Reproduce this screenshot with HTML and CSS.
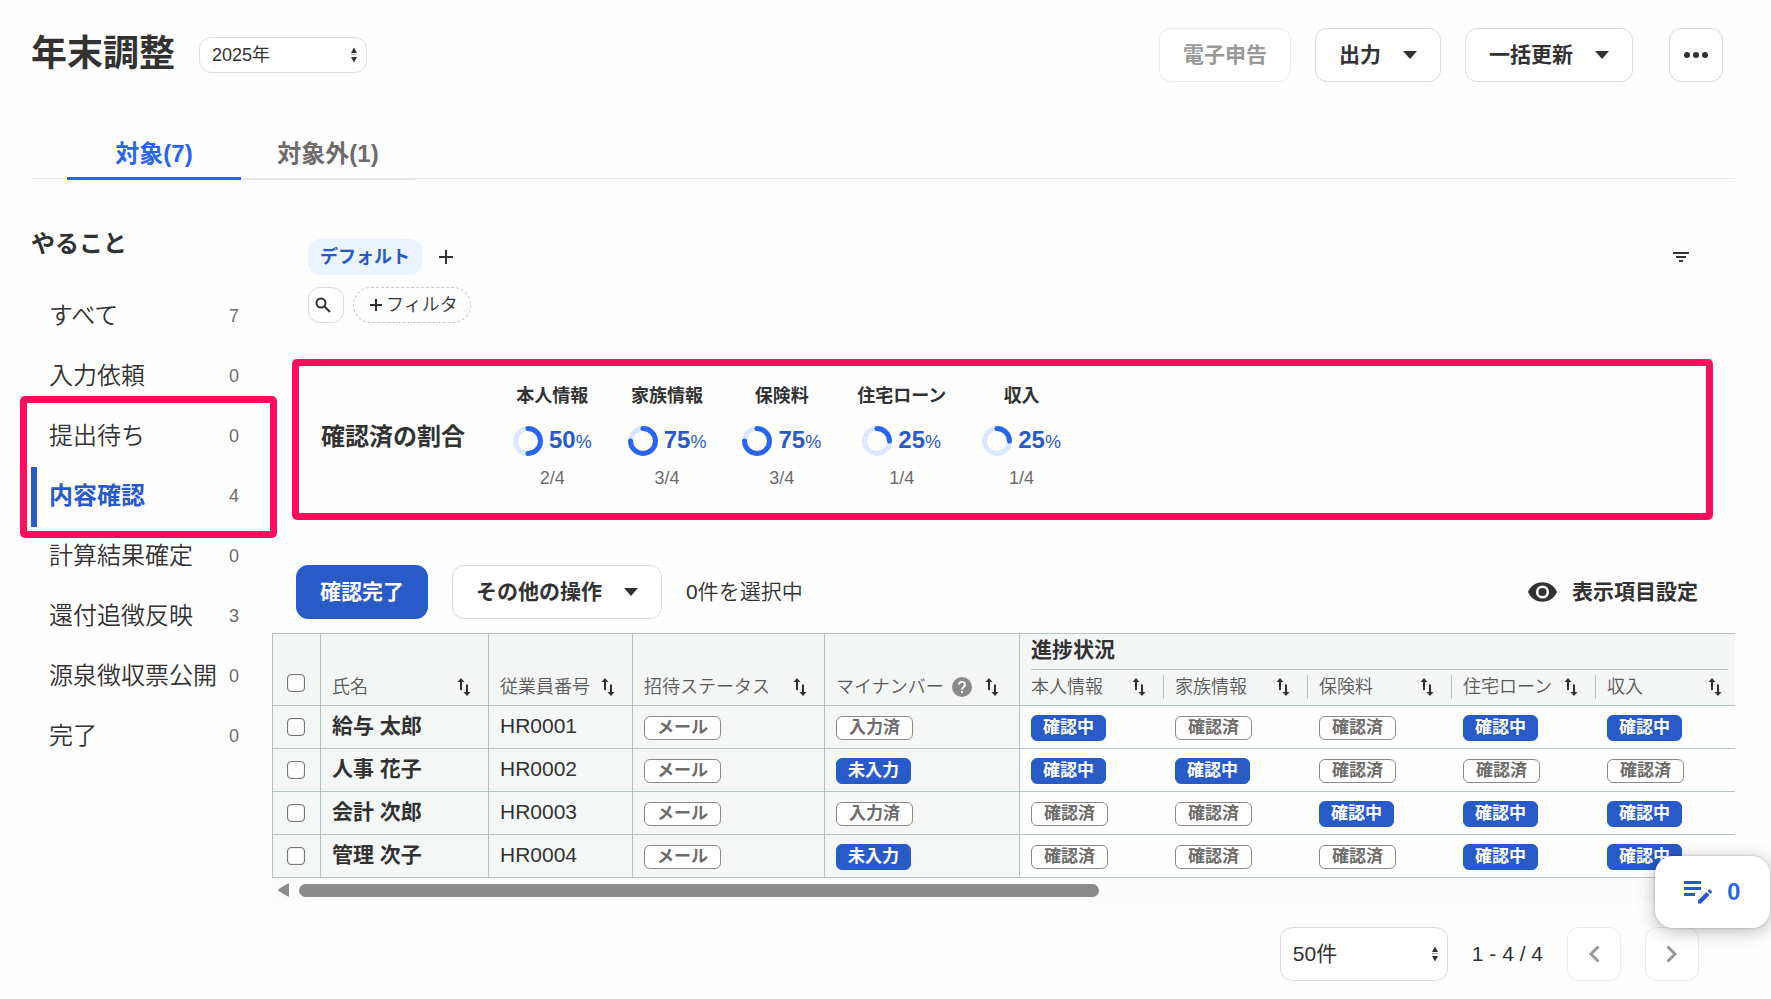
FILE: index.html
```html
<!DOCTYPE html>
<html lang="ja">
<head>
<meta charset="utf-8">
<meta name="viewport" content="width=device-width, initial-scale=1">
<title>年末調整</title>
<link rel="stylesheet" href="styles.css">
</head>
<body>
<svg class="sprite" aria-hidden="true">
  <symbol id="i-caret" viewBox="0 0 14 8"><path d="M0 0h14L7 8z"/></symbol>
  <symbol id="i-updown" viewBox="0 0 8 16"><path d="M4 0.500L7 6H1zM4 15.500L1 10h6z"/><path d="M1 7h6v1H1z" opacity=".35"/></symbol>
  <symbol id="i-sort" viewBox="0 0 24 24"><path d="M9 3l3.500 4H10v8H8V7H5.500zM15 21l-3.500-4H14V9.500h2V17h2.500z"/></symbol>
  <symbol id="i-help" viewBox="0 0 24 24"><circle cx="12" cy="12" r="10"/><path d="M9 9.600a3 2.800 0 1 1 4.700 2.300c-1.100.8-1.700 1.200-1.700 2.700" fill="none" stroke="#fff" stroke-width="2"/><path d="M11 16h2v2h-2z" fill="#fff"/></symbol>
</svg>
<div class="page">
  <header class="header">
    <h1 class="title">年末調整</h1>
    <div class="select select-year">
      <select aria-label="年度"><option>2025年</option></select>
      <svg><use href="#i-updown"/></svg>
    </div>
    <div class="actions">
      <button class="btn" disabled>電子申告</button>
      <button class="btn">出力<svg class="caret"><use href="#i-caret"/></svg></button>
      <button class="btn">一括更新<svg class="caret"><use href="#i-caret"/></svg></button>
      <button class="btn btn-more" aria-label="その他"><svg viewBox="0 0 26 8"><circle cx="4" cy="4" r="3"/><circle cx="13" cy="4" r="3"/><circle cx="22" cy="4" r="3"/></svg></button>
    </div>
  </header>

  <nav class="tabs">
    <a class="tab is-active" href="#target">対象(7)</a>
    <a class="tab" href="#excluded">対象外(1)</a>
  </nav>

  <div class="body">
    <aside class="sidebar">
      <h2 class="side-title">やること</h2>
      <ul class="todo">
        <li><a href="#all"><span>すべて</span><span class="count">7</span></a></li>
        <li><a href="#request"><span>入力依頼</span><span class="count">0</span></a></li>
        <li><a href="#waiting"><span>提出待ち</span><span class="count">0</span></a></li>
        <li><a class="is-current" href="#check"><span>内容確認</span><span class="count">4</span></a></li>
        <li><a href="#fix"><span>計算結果確定</span><span class="count">0</span></a></li>
        <li><a href="#refund"><span>還付追徴反映</span><span class="count">3</span></a></li>
        <li><a href="#publish"><span>源泉徴収票公開</span><span class="count">0</span></a></li>
        <li><a href="#done"><span>完了</span><span class="count">0</span></a></li>
      </ul>
      <div class="highlight"></div>
    </aside>

    <main class="main">
      <div class="views">
        <button class="view-chip">デフォルト</button>
        <button class="icon-btn" aria-label="ビューを追加"><svg class="plus" viewBox="0 0 16 16"><path d="M7 1h2v6h6v2H9v6H7V9H1V7h6z"/></svg></button>
        <button class="icon-btn filter-btn" aria-label="並べ替え"><svg class="filter-icon" viewBox="0 0 16 10"><path d="M0 0h16v2H0zM3 4h10v2H3zM6 8h4v2H6z"/></svg></button>
      </div>
      <div class="filters">
        <button class="search-btn" aria-label="検索"><svg viewBox="0 0 16 16"><circle cx="6" cy="6" r="4.500" fill="none" stroke="currentColor" stroke-width="2"/><path d="M9.500 9.500L15 15" stroke="currentColor" stroke-width="2"/></svg></button>
        <button class="add-filter"><svg viewBox="0 0 12 12"><path d="M5 0h2v5h5v2H7v5H5V7H0V5h5z"/></svg>フィルタ</button>
      </div>

      <section class="summary">
        <h2 class="summary-title">確認済の割合</h2>
        <dl class="rates">
          <div class="rate"><dt>本人情報</dt><dd class="pct"><svg class="ring" viewBox="0 0 30 30"><circle class="track" cx="15" cy="15" r="12.500"/><circle class="arc" cx="15" cy="15" r="12.500" pathLength="100" stroke-dasharray="50 100"/></svg><span><b>50</b>%</span></dd><dd class="frac">2/4</dd></div>
          <div class="rate"><dt>家族情報</dt><dd class="pct"><svg class="ring" viewBox="0 0 30 30"><circle class="track" cx="15" cy="15" r="12.500"/><circle class="arc" cx="15" cy="15" r="12.500" pathLength="100" stroke-dasharray="75 100"/></svg><span><b>75</b>%</span></dd><dd class="frac">3/4</dd></div>
          <div class="rate"><dt>保険料</dt><dd class="pct"><svg class="ring" viewBox="0 0 30 30"><circle class="track" cx="15" cy="15" r="12.500"/><circle class="arc" cx="15" cy="15" r="12.500" pathLength="100" stroke-dasharray="75 100"/></svg><span><b>75</b>%</span></dd><dd class="frac">3/4</dd></div>
          <div class="rate"><dt>住宅ローン</dt><dd class="pct"><svg class="ring" viewBox="0 0 30 30"><circle class="track" cx="15" cy="15" r="12.500"/><circle class="arc" cx="15" cy="15" r="12.500" pathLength="100" stroke-dasharray="25 100"/></svg><span><b>25</b>%</span></dd><dd class="frac">1/4</dd></div>
          <div class="rate"><dt>収入</dt><dd class="pct"><svg class="ring" viewBox="0 0 30 30"><circle class="track" cx="15" cy="15" r="12.500"/><circle class="arc" cx="15" cy="15" r="12.500" pathLength="100" stroke-dasharray="25 100"/></svg><span><b>25</b>%</span></dd><dd class="frac">1/4</dd></div>
        </dl>
      </section>

      <div class="toolbar">
        <button class="btn btn-primary">確認完了</button>
        <button class="btn">その他の操作<svg class="caret"><use href="#i-caret"/></svg></button>
        <span class="selected">0件を選択中</span>
        <button class="columns-btn"><svg viewBox="0 0 30 20"><path fill-rule="evenodd" d="M15 0C8 0 2.500 4 0 10c2.500 6 8 10 15 10s12.500-4 15-10C27.500 4 22 0 15 0zm0 3.200a6.800 6.800 0 1 1 0 13.600 6.800 6.800 0 0 1 0-13.600z"/><circle cx="15" cy="10" r="4.200"/></svg>表示項目設定</button>
      </div>

      <div class="table-wrap">
        <table class="grid">
          <colgroup><col class="c-check"><col class="c-name"><col class="c-no"><col class="c-invite"><col class="c-my"><col class="c-prog" span="5"></colgroup>
          <thead>
            <tr>
              <th class="check" rowspan="2"><input type="checkbox" aria-label="すべて選択"></th>
              <th rowspan="2"><div class="label">氏名<svg><use href="#i-sort"/></svg></div></th>
              <th rowspan="2"><div class="label">従業員番号<svg><use href="#i-sort"/></svg></div></th>
              <th rowspan="2"><div class="label">招待ステータス<svg><use href="#i-sort"/></svg></div></th>
              <th rowspan="2"><div class="label label-help">マイナンバー<svg class="help"><use href="#i-help"/></svg><svg><use href="#i-sort"/></svg></div></th>
              <th class="group" colspan="5"><div>進捗状況</div></th>
            </tr>
            <tr class="subs">
              <th><div class="label">本人情報<svg><use href="#i-sort"/></svg></div></th>
              <th><div class="label">家族情報<svg><use href="#i-sort"/></svg></div></th>
              <th><div class="label">保険料<svg><use href="#i-sort"/></svg></div></th>
              <th><div class="label">住宅ローン<svg><use href="#i-sort"/></svg></div></th>
              <th><div class="label">収入<svg><use href="#i-sort"/></svg></div></th>
            </tr>
          </thead>
          <tbody>
            <tr>
              <td class="check"><input type="checkbox" aria-label="給与 太郎を選択"></td><td class="text name">給与 太郎</td><td class="text">HR0001</td>
              <td><span class="badge">メール</span></td><td><span class="badge">入力済</span></td>
              <td><span class="badge on">確認中</span></td><td><span class="badge">確認済</span></td><td><span class="badge">確認済</span></td><td><span class="badge on">確認中</span></td><td><span class="badge on">確認中</span></td>
            </tr>
            <tr>
              <td class="check"><input type="checkbox" aria-label="人事 花子を選択"></td><td class="text name">人事 花子</td><td class="text">HR0002</td>
              <td><span class="badge">メール</span></td><td><span class="badge on">未入力</span></td>
              <td><span class="badge on">確認中</span></td><td><span class="badge on">確認中</span></td><td><span class="badge">確認済</span></td><td><span class="badge">確認済</span></td><td><span class="badge">確認済</span></td>
            </tr>
            <tr>
              <td class="check"><input type="checkbox" aria-label="会計 次郎を選択"></td><td class="text name">会計 次郎</td><td class="text">HR0003</td>
              <td><span class="badge">メール</span></td><td><span class="badge">入力済</span></td>
              <td><span class="badge">確認済</span></td><td><span class="badge">確認済</span></td><td><span class="badge on">確認中</span></td><td><span class="badge on">確認中</span></td><td><span class="badge on">確認中</span></td>
            </tr>
            <tr>
              <td class="check"><input type="checkbox" aria-label="管理 次子を選択"></td><td class="text name">管理 次子</td><td class="text">HR0004</td>
              <td><span class="badge">メール</span></td><td><span class="badge on">未入力</span></td>
              <td><span class="badge">確認済</span></td><td><span class="badge">確認済</span></td><td><span class="badge">確認済</span></td><td><span class="badge on">確認中</span></td><td><span class="badge on">確認中</span></td>
            </tr>
          </tbody>
        </table>
      </div>
      <div class="scrollbar"><svg viewBox="0 0 11 14"><path d="M11 1v12q0 1-1 .6L.7 8Q0 7 .7 6L10 .4q1-.4 1 .6z"/></svg><div class="track-area"><div class="thumb"></div></div></div>

      <div class="pager">
        <div class="select select-size">
          <select aria-label="表示件数"><option>50件</option></select>
          <svg><use href="#i-updown"/></svg>
        </div>
        <span class="range">1 - 4 / 4</span>
        <button class="btn btn-page" disabled aria-label="前へ"><svg viewBox="0 0 12 18"><path d="M10.500 1.500L3 9l7.500 7.500"/></svg></button>
        <button class="btn btn-page" disabled aria-label="次へ"><svg viewBox="0 0 12 18"><path d="M1.500 1.500L9 9l-7.500 7.500"/></svg></button>
      </div>
    </main>
  </div>
</div>
<button class="memo" aria-label="メモ 0件"><svg viewBox="0 0 28 24"><path d="M0 1h17v3H0zM0 7h17v3H0zM0 13h11v3H0zM14 20.500l8.500-8.500 3 3L17 23.500h-3zM23.500 11l1.300-1.300q.7-.7 1.400 0l1.500 1.500q.7.700 0 1.400L26.400 14z"/></svg>0</button>
</body>
</html>
```
FILE: styles.css
```css
:root {
  --ink: #323232;
  --muted: #6e6b6b;
  --line: #dcdcdc;
  --grid: #b5c5c3;
  --blue: #285ac8;
  --bright: #2864f0;
  --mark: #ff0d5a;
}

* { box-sizing: border-box; }

body {
  margin: 0;
  background: #fefefe;
  color: var(--ink);
  font-family: "Liberation Sans", "Noto Sans CJK JP", sans-serif;
  font-size: 21px;
  line-height: 24px;
}

h1, h2, ul, dl, dd { margin: 0; padding: 0; }
a { color: inherit; text-decoration: none; }
button, select { font: inherit; color: inherit; }
button { padding: 0; border: 0; background: none; }
svg { display: block; fill: currentColor; flex: none; }
.sprite { position: absolute; width: 0; height: 0; }

.page { padding: 28px 36px 0 31px; }

.header { display: flex; align-items: center; padding-right: 12px; }
.title { font-size: 36px; line-height: 52px; padding-bottom: 2px; margin-right: 24px; }
.actions { display: flex; gap: 24px; margin-left: auto; }

.btn {
  display: inline-flex;
  align-items: center;
  justify-content: center;
  gap: 22px;
  height: 54px;
  padding: 0 23px;
  border: 1px solid var(--line);
  border-radius: 12px;
  background: #fff;
  font-weight: 700;
}
.btn:disabled { color: #999; border-color: #ececec; }
.caret { width: 14px; height: 8px; }
.btn-more { width: 54px; padding: 0; margin-left: 12px; }
.btn-more svg { width: 26px; height: 8px; }

.select { display: grid; align-items: center; }
.select > * { grid-area: 1 / 1; }
.select select {
  appearance: none;
  width: 168px;
  border: 1px solid var(--line);
  border-radius: 12px;
  background: #fff;
  padding: 0 12px;
}
.select svg { justify-self: end; width: 8px; height: 16px; margin-right: 9px; pointer-events: none; }
.select-year select { height: 36px; font-size: 18px; }
.select-size select { height: 54px; }

.tabs {
  display: flex;
  margin-top: 45px;
  height: 52px;
  padding-left: 36px;
  border-bottom: 1px solid #e6e6e6;
}
.tab {
  width: 174px;
  height: 53px;
  padding-top: 15px;
  text-align: center;
  font-size: 24px;
  font-weight: 700;
  color: var(--muted);
  border-bottom: 2px solid #e6e6e6;
}
.tab.is-active { color: var(--bright); border-bottom: 3px solid var(--bright); }

.body { display: flex; }
.sidebar { position: relative; flex: none; width: 241px; padding-top: 47px; }
.side-title { font-size: 24px; line-height: 36px; margin-bottom: 25px; }
.todo { list-style: none; }
.todo a {
  display: flex;
  align-items: center;
  justify-content: space-between;
  height: 60px;
  padding: 0 33px 2px 12px;
  border-left: 6px solid transparent;
  font-size: 24px;
  font-weight: 350;
}
.todo .count { font-size: 18px; font-weight: 400; color: var(--muted); }
.todo .is-current { border-color: var(--blue); color: var(--blue); font-weight: 700; }

/* Callout frame laid over the two steps being explained */
.highlight {
  position: absolute;
  top: 217px;
  left: -11px;
  right: -5px;
  height: 142px;
  border: 7px solid var(--mark);
  border-radius: 5px;
  pointer-events: none;
}

.main { flex: 1; min-width: 0; padding-top: 60px; }
.views, .filters { display: flex; align-items: center; padding-left: 36px; }
.view-chip {
  height: 36px;
  padding: 0 12px;
  border-radius: 12px;
  background: #ebf3ff;
  color: var(--blue);
  font-size: 18px;
  font-weight: 700;
}
.icon-btn { display: grid; place-items: center; width: 48px; height: 36px; }
.plus { width: 16px; height: 16px; }
.filter-btn { margin-left: auto; margin-right: 30px; }
.filter-icon { width: 16px; height: 10px; }
.filters { margin-top: 12px; gap: 9px; }
.search-btn {
  width: 36px;
  height: 36px;
  padding-left: 6px;
  border: 1px solid var(--line);
  border-radius: 12px;
  background: #fff;
}
.search-btn svg { width: 16px; height: 16px; }
.add-filter {
  display: flex;
  align-items: center;
  gap: 4px;
  height: 36px;
  padding: 0 12px 0 16px;
  border: 1px dashed #c8c8c8;
  border-radius: 18px;
  font-size: 18px;
  font-weight: 350;
}
.add-filter svg { width: 12px; height: 12px; }

.summary {
  display: flex;
  align-items: center;
  gap: 48px;
  margin: 36px 22px 0 20px;
  padding: 18px 22px 23px;
  border: 7px solid var(--mark);
  border-radius: 5px;
}
.summary-title { font-size: 24px; line-height: 36px; }
.rates { display: flex; gap: 36px; }
.rate { text-align: center; font-size: 18px; }
.rate dt { font-weight: 700; }
.pct { display: flex; align-items: center; justify-content: center; gap: 6px; height: 30px; margin: 18px 0 10px; color: var(--blue); }
.pct b { font-size: 24px; }
.frac { color: var(--muted); }
.ring { width: 30px; height: 30px; transform: rotate(-90deg); fill: none; stroke-width: 5; }
.ring .track { stroke: #dce8ff; }
.ring .arc { stroke: var(--bright); stroke-linecap: round; }

.toolbar { display: flex; align-items: center; gap: 24px; margin-top: 45px; padding: 0 37px 0 24px; }
.btn-primary { background: var(--blue); border-color: var(--blue); color: #fff; }
.selected { font-weight: 350; }
.columns-btn { display: flex; align-items: center; gap: 15px; margin-left: auto; font-weight: 700; }
.columns-btn svg { width: 29px; height: 20px; }

.table-wrap { margin-top: 14px; overflow: hidden; }
.grid {
  table-layout: fixed;
  width: 1468px;
  border-collapse: separate;
  border-spacing: 0;
  border-top: 1px solid var(--grid);
}
.c-check { width: 49px; }
.c-name { width: 168px; }
.c-no, .c-prog { width: 144px; }
.c-invite { width: 192px; }
.c-my { width: 195px; }

.grid th, .grid td { padding: 0; text-align: left; border-bottom: 1px solid var(--grid); }
.grid th { background: #f4f6f6; font-size: 18px; font-weight: 350; color: #5a5a5a; vertical-align: bottom; }
.grid th[rowspan] { border-right: 1px solid var(--grid); }
.grid .check { border-left: 1px solid var(--grid); padding-right: 2px; }
.grid thead tr { height: 36px; }
.grid tbody tr { height: 43px; }
.grid td { padding: 1px 0 0 11px; vertical-align: middle; }
.grid td.check { padding: 0 2px 0 0; }
.grid td.text { padding: 0 0 3px 11px; }
.grid td:nth-child(-n+5) { background: #f5f7f7; border-right: 1px solid var(--grid); }
.grid .name { font-weight: 700; }
.grid input { appearance: none; display: block; width: 18px; height: 18px; margin: 0 auto; border: 1px solid #767676; border-radius: 4px; background: #fff; box-shadow: inset 0 0 1px #767676; }
.grid th input { margin-bottom: 13px; }

.label { display: flex; align-items: center; justify-content: space-between; height: 24px; margin-bottom: 6px; padding: 0 12px 0 11px; }
.label svg { width: 24px; height: 24px; color: #323232; }
.label .help { color: #8c8989; }
.label-help { justify-content: flex-start; gap: 6px; }
.subs .label { border-right: 1px solid var(--grid); }
.grid .group { border-bottom: 0; }
.group div { height: 36px; margin: 0 12px 0 11px; padding-top: 4px; border-bottom: 1px solid var(--grid); font-size: 21px; font-weight: 700; color: var(--ink); }

.badge {
  display: block;
  width: max-content;
  padding: 0 12px;
  border: 1px solid #8c8989;
  border-radius: 6px;
  background: #fff;
  color: var(--muted);
  font-size: 17px;
  line-height: 22px;
  font-weight: 700;
}
.badge.on { padding: 1px 11px; border-color: var(--blue); background: var(--blue); color: #fff; }

.scrollbar { display: flex; align-items: center; gap: 10px; height: 24px; padding-left: 6px; background: #fcfcfc; color: #8b8b8b; }
.scrollbar svg { width: 11px; height: 14px; }
.track-area { flex: 1; }
.thumb { width: 55.7%; height: 13px; border-radius: 7px; background: #8b8b8b; }

.pager { display: flex; align-items: center; justify-content: flex-end; gap: 24px; margin-top: 25px; padding-right: 36px; }
.btn-page { width: 54px; padding: 0; }
.btn-page svg { width: 12px; height: 18px; fill: none; stroke: #999; stroke-width: 3; }

.memo {
  position: fixed;
  right: 1px;
  bottom: 71px;
  display: flex;
  align-items: center;
  justify-content: center;
  gap: 15px;
  width: 115px;
  height: 72px;
  border-radius: 18px;
  background: #fff;
  color: var(--bright);
  font-size: 24px;
  font-weight: 700;
  box-shadow: 0 0 3px rgba(0, 0, 0, .2), 0 3px 18px rgba(0, 0, 0, .28);
}
.memo svg { width: 28px; height: 24px; color: var(--blue); }
```
